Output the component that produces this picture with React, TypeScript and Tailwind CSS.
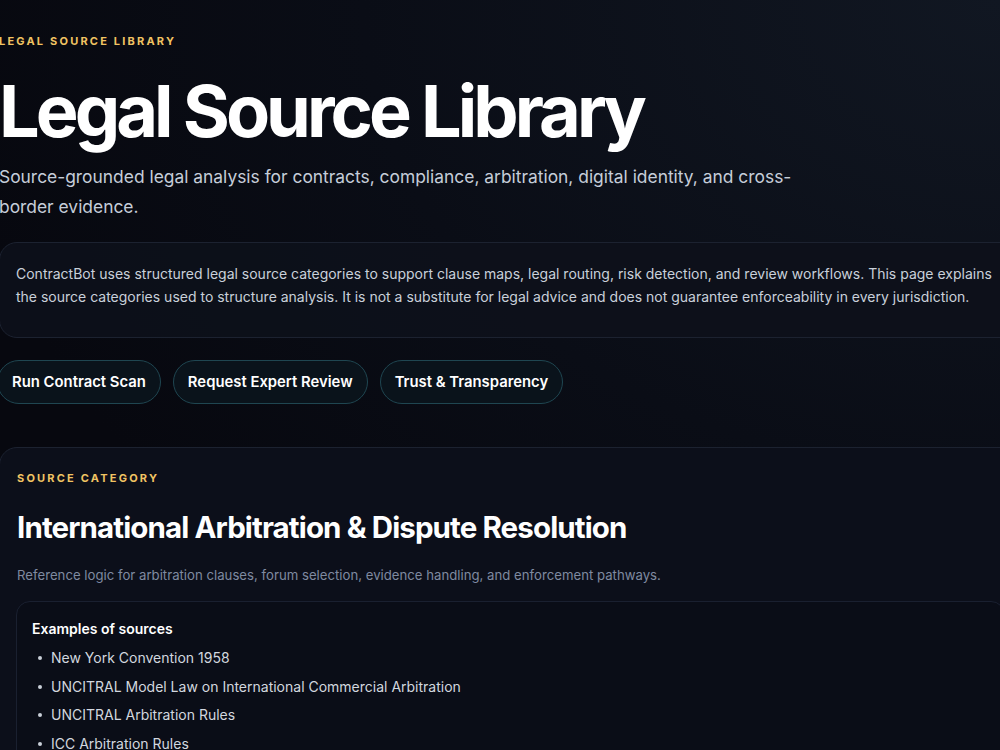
const sources = [
  "New York Convention 1958",
  "UNCITRAL Model Law on International Commercial Arbitration",
  "UNCITRAL Arbitration Rules",
  "ICC Arbitration Rules",
  "LCIA Arbitration Rules",
];

const actions = ["Run Contract Scan", "Request Expert Review", "Trust & Transparency"];

export default function App() {
  return (
    <div
      className="min-h-screen h-[750px] overflow-hidden bg-[#07080f] bg-[radial-gradient(ellipse_at_top_right,#111722_0%,#0a0d16_45%,#07080f_75%)] text-white"
      style={{ fontFamily: "Inter, 'Noto Sans', sans-serif" }}
    >
      <main className="-ml-px w-[1024px] pt-[36px]">
        <p className="text-[11px] font-bold tracking-[0.2em] leading-[11px] text-[#f1c463]">
          LEGAL SOURCE LIBRARY
        </p>

        <h1 className="mt-[22px] text-[72px] font-bold leading-[84px] tracking-[-0.055em] text-white">
          Legal Source Library
        </h1>

        <p className="mt-[9px] max-w-[800px] text-[17.4px] leading-[30px] text-[#c5cdd9]">
          Source-grounded legal analysis for contracts, compliance, arbitration, digital identity, and
          cross-border evidence.
        </p>

        <div className="mt-[20px] h-[96px] rounded-[18px] border border-[#1c2230] bg-[#0d111b]/90 px-[16px] pt-[19px]">
          <p className="text-[14px] leading-[23px] text-[#c9d0da]">
            ContractBot uses structured legal source categories to support clause maps, legal routing, risk
            detection, and review workflows. This page explains the source categories used to structure
            analysis. It is not a substitute for legal advice and does not guarantee enforceability in every
            jurisdiction.
          </p>
        </div>

        <div className="mt-[22px] -ml-[2px] flex gap-[12px]">
          {actions.map((a) => (
            <button
              key={a}
              className="h-[44px] rounded-full border border-[#1f4651] bg-[#0a131b] px-[14px] text-[14.85px] font-semibold text-white"
            >
              {a}
            </button>
          ))}
        </div>

        <section className="mt-[43px] rounded-[18px] border border-[#1c2230] bg-[#0c0f1a] px-[17px] pt-[25px] pb-6">
          <p className="text-[11px] font-bold tracking-[0.2em] leading-[11px] text-[#f1c463]">
            SOURCE CATEGORY
          </p>
          <h2 className="mt-[25px] text-[29.5px] font-bold leading-[36px] tracking-[-0.03em] text-white">
            International Arbitration &amp; Dispute Resolution
          </h2>
          <p className="mt-[20px] text-[13.2px] leading-[20px] text-[#7f8aa0]">
            Reference logic for arbitration clauses, forum selection, evidence handling, and enforcement
            pathways.
          </p>

          <div className="mt-[16px] -ml-px rounded-[14px] border border-[#1a2030] bg-[#0a0d17] px-[15px] pt-[17px] pb-4">
            <h3 className="text-[14px] font-semibold leading-[20px] text-white">Examples of sources</h3>
            <ul className="mt-[9px] flex flex-col gap-[8.5px]">
              {sources.map((s) => (
                <li key={s} className="flex items-center text-[14px] leading-[20px] text-[#d2d7df]">
                  <span className="ml-[6px] mr-[9px] h-[4px] w-[4px] rounded-full bg-[#c9cfd8]" />
                  {s}
                </li>
              ))}
            </ul>
          </div>
        </section>
      </main>
    </div>
  );
}
